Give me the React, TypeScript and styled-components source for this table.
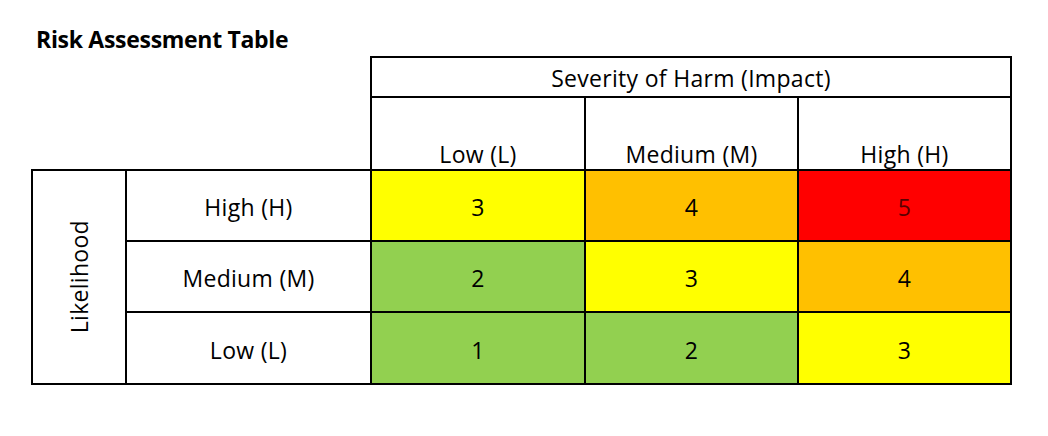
import React from "react";
import styled, { createGlobalStyle } from "styled-components";

const GlobalStyle = createGlobalStyle`
  html, body {
    margin: 0;
    padding: 0;
    background: #ffffff;
  }
  body {
    font-family: "Open Sans", "Noto Sans", Arial, sans-serif;
    color: #000000;
  }
`;

const Page = styled.div`
  width: 1048px;
  height: 436px;
  box-sizing: border-box;
  padding: 24px 0 0 32px;
  display: flex;
  flex-direction: column;
  align-items: flex-start;
`;

const Title = styled.h1`
  margin: 0 0 2px 4px;
  font-family: "Open Sans", sans-serif;
  font-size: 23px;
  line-height: 30px;
  font-weight: 700;
  letter-spacing: -0.3px;
`;

const Table = styled.table`
  border-collapse: collapse;
  table-layout: fixed;
  margin-left: -1px;
  font-family: "Open Sans", sans-serif;
  font-size: 23px;
  line-height: 30px;
  letter-spacing: 0.3px;
`;

const Corner = styled.td`
  border: none;
  padding: 0;
`;

const Cell = styled.td<{ $bg?: string; $ink?: string; $align?: "middle" | "bottom"; $h?: number }>`
  border: 2px solid #000;
  padding: ${(p) => (p.$align === "bottom" ? "0" : "3px 0 0 0")};
  text-align: center;
  vertical-align: ${(p) => p.$align ?? "middle"};
  background: ${(p) => p.$bg ?? "#ffffff"};
  color: ${(p) => p.$ink ?? "#000000"};
  font-weight: 400;
  height: ${(p) => (p.$h ? `${p.$h}px` : "auto")};
  box-sizing: border-box;
  white-space: nowrap;
`;

const VerticalLabel = styled.span`
  display: inline-block;
  writing-mode: vertical-rl;
  transform: rotate(180deg);
  margin-top: 6px;
`;

type Level = { label: string; h: number; cells: { value: number; bg: string; ink?: string }[] };

const YELLOW = "#ffff00";
const ORANGE = "#ffc000";
const RED = "#ff0000";
const GREEN = "#92d050";

const rows: Level[] = [
  {
    label: "High (H)",
    h: 71,
    cells: [
      { value: 3, bg: YELLOW },
      { value: 4, bg: ORANGE },
      { value: 5, bg: RED, ink: "#5a0000" },
    ],
  },
  {
    label: "Medium (M)",
    h: 71,
    cells: [
      { value: 2, bg: GREEN },
      { value: 3, bg: YELLOW },
      { value: 4, bg: ORANGE },
    ],
  },
  {
    label: "Low (L)",
    h: 72,
    cells: [
      { value: 1, bg: GREEN },
      { value: 2, bg: GREEN },
      { value: 3, bg: YELLOW },
    ],
  },
];

const colWidths = [94, 245, 214, 213, 213];

export default function App() {
  return (
    <>
      <GlobalStyle />
      <Page>
        <Title>Risk Assessment Table</Title>
        <Table>
          <colgroup>
            {colWidths.map((w, i) => (
              <col key={i} style={{ width: w }} />
            ))}
          </colgroup>
          <tbody>
            <tr>
              <Corner colSpan={2} rowSpan={2} />
              <Cell as="th" colSpan={3} $h={40} style={{ paddingTop: 1 }}>
                Severity of Harm (Impact)
              </Cell>
            </tr>
            <tr>
              <Cell as="th" $align="bottom" $h={73}>Low (L)</Cell>
              <Cell as="th" $align="bottom" $h={73}>Medium (M)</Cell>
              <Cell as="th" $align="bottom" $h={73}>High (H)</Cell>
            </tr>
            {rows.map((r, ri) => (
              <tr key={r.label}>
                {ri === 0 && (
                  <Cell as="th" rowSpan={3} style={{ paddingTop: 0 }}>
                    <VerticalLabel>Likelihood</VerticalLabel>
                  </Cell>
                )}
                <Cell as="th" $h={r.h}>{r.label}</Cell>
                {r.cells.map((c, ci) => (
                  <Cell key={ci} $bg={c.bg} $ink={c.ink} $h={r.h}>
                    {c.value}
                  </Cell>
                ))}
              </tr>
            ))}
          </tbody>
        </Table>
      </Page>
    </>
  );
}
